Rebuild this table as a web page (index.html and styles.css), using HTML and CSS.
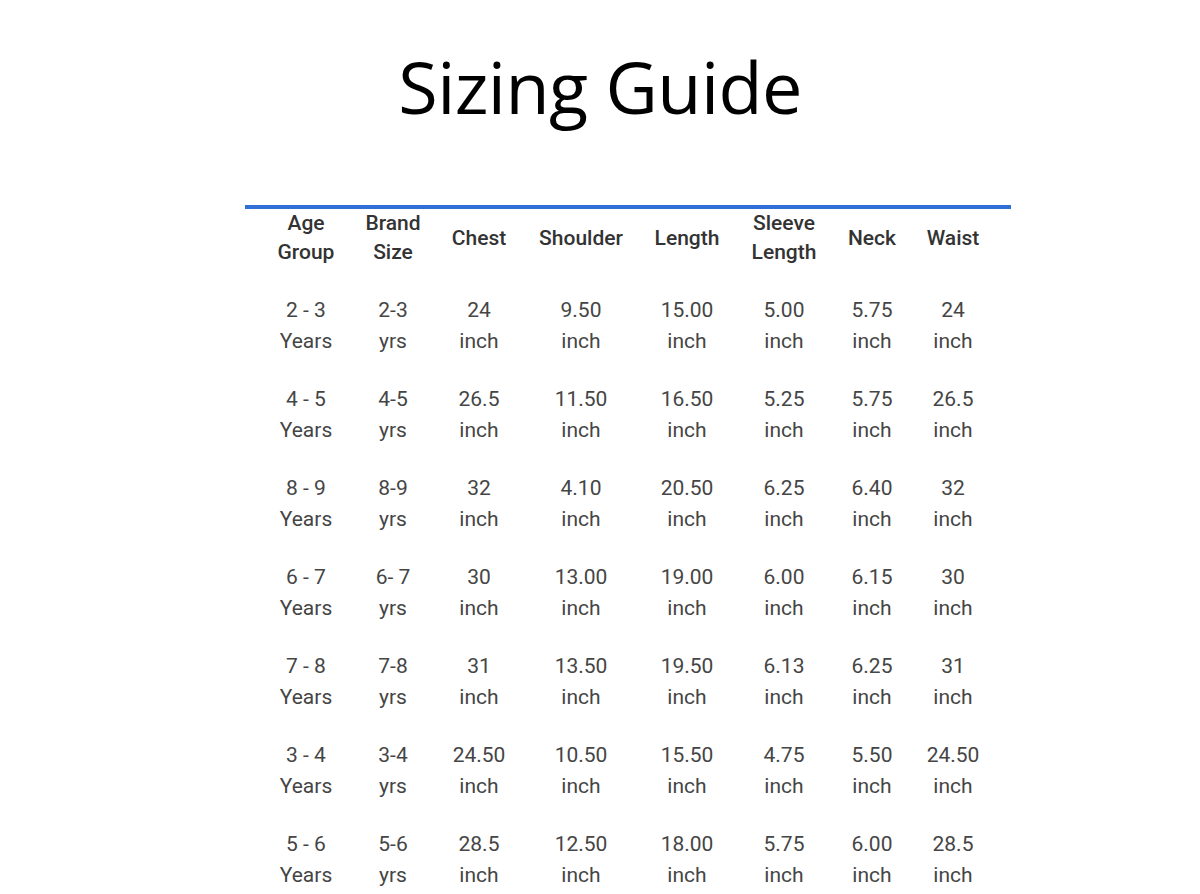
FILE: index.html
```html
<!DOCTYPE html>
<html>
<head>
<meta charset="utf-8">
<link rel="stylesheet" href="styles.css">
</head>
<body>
<h1 class="title">Sizing Guide</h1>
<div class="wrap">
<table class="sizes">
<colgroup>
<col class="c1"><col class="c2"><col class="c3"><col class="c4"><col class="c5"><col class="c6"><col class="c7"><col class="c8">
</colgroup>
<thead>
<tr><th>Age<br>Group</th><th>Brand<br>Size</th><th>Chest</th><th>Shoulder</th><th>Length</th><th>Sleeve<br>Length</th><th>Neck</th><th>Waist</th></tr>
</thead>
<tbody>
<tr><td>2 - 3<br>Years</td><td>2-3<br>yrs</td><td>24<br>inch</td><td>9.50<br>inch</td><td>15.00<br>inch</td><td>5.00<br>inch</td><td>5.75<br>inch</td><td>24<br>inch</td></tr>
<tr><td>4 - 5<br>Years</td><td>4-5<br>yrs</td><td>26.5<br>inch</td><td>11.50<br>inch</td><td>16.50<br>inch</td><td>5.25<br>inch</td><td>5.75<br>inch</td><td>26.5<br>inch</td></tr>
<tr><td>8 - 9<br>Years</td><td>8-9<br>yrs</td><td>32<br>inch</td><td>4.10<br>inch</td><td>20.50<br>inch</td><td>6.25<br>inch</td><td>6.40<br>inch</td><td>32<br>inch</td></tr>
<tr><td>6 - 7<br>Years</td><td>6- 7<br>yrs</td><td>30<br>inch</td><td>13.00<br>inch</td><td>19.00<br>inch</td><td>6.00<br>inch</td><td>6.15<br>inch</td><td>30<br>inch</td></tr>
<tr><td>7 - 8<br>Years</td><td>7-8<br>yrs</td><td>31<br>inch</td><td>13.50<br>inch</td><td>19.50<br>inch</td><td>6.13<br>inch</td><td>6.25<br>inch</td><td>31<br>inch</td></tr>
<tr><td>3 - 4<br>Years</td><td>3-4<br>yrs</td><td>24.50<br>inch</td><td>10.50<br>inch</td><td>15.50<br>inch</td><td>4.75<br>inch</td><td>5.50<br>inch</td><td>24.50<br>inch</td></tr>
<tr><td>5 - 6<br>Years</td><td>5-6<br>yrs</td><td>28.5<br>inch</td><td>12.50<br>inch</td><td>18.00<br>inch</td><td>5.75<br>inch</td><td>6.00<br>inch</td><td>28.5<br>inch</td></tr>
</tbody>
</table>
</div>
</body>
</html>
```
FILE: styles.css
```css
html, body {
  margin: 0;
  padding: 0;
  background: #ffffff;
  overflow: hidden;
}
body {
  width: 1200px;
  height: 894px;
}
.title {
  margin: 0;
  padding-top: 42px;
  height: 163px;
  box-sizing: border-box;
  text-align: center;
  font-family: "Open Sans", "Noto Sans", sans-serif;
  font-weight: 400;
  font-size: 72px;
  line-height: 88px;
  color: #000;
  letter-spacing: -0.6px;
}
.wrap {
  margin-top: 42px;
  margin-left: 245px;
  width: 766px;
  border-top: 4px solid #2f6fd6;
  padding-left: 13px;
  box-sizing: border-box;
}
.sizes {
  border-collapse: collapse;
  table-layout: fixed;
  width: 734px;
  font-family: Roboto, "Liberation Sans", sans-serif;
  font-size: 21px;
  line-height: 31px;
}
.c1 { width: 96px; }
.c2 { width: 78px; }
.c3 { width: 94px; }
.c4 { width: 110px; }
.c5 { width: 102px; }
.c6 { width: 92px; }
.c7 { width: 84px; }
.c8 { width: 78px; }
.sizes th {
  font-weight: 500;
  color: #333;
  text-align: center;
  vertical-align: middle;
  line-height: 29px;
  padding: 0 0 15px 0;
  height: 58px;
}
.sizes td {
  color: #454545;
  text-align: center;
  vertical-align: middle;
  padding: 13px 0 14px 0;
  height: 62px;
}
```
